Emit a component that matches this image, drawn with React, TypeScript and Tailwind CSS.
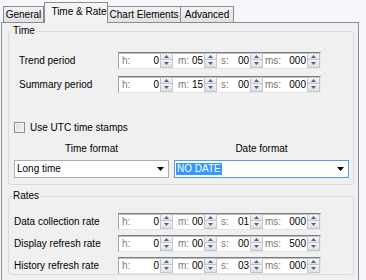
import type { ReactNode } from 'react'

type Row = { label: string; values: [string, string, string, string] }

const timeRows: Row[] = [
  { label: 'Trend period', values: ['0', '05', '00', '000'] },
  { label: 'Summary period', values: ['0', '15', '00', '000'] },
]

const rateRows: Row[] = [
  { label: 'Data collection rate', values: ['0', '00', '01', '000'] },
  { label: 'Display refresh rate', values: ['0', '00', '00', '500'] },
  { label: 'History refresh rate', values: ['0', '00', '03', '000'] },
]

function SpinButtons() {
  return (
    <span className="flex h-full w-[13px] shrink-0 flex-col">
      <span className="flex h-[7px] items-center justify-center border border-[#c2c6cc] bg-gradient-to-b from-[#f8f8f8] to-[#e3e4e6]">
        <svg width="5" height="3" viewBox="0 0 5 3">
          <path d="M0 3 L2.5 0 L5 3 Z" fill="#4b6489" />
        </svg>
      </span>
      <span className="flex flex-1 items-center justify-center border border-t-0 border-[#c2c6cc] bg-gradient-to-b from-[#f3f3f3] to-[#dfe0e2]">
        <svg width="5" height="3" viewBox="0 0 5 3">
          <path d="M0 0 L5 0 L2.5 3 Z" fill="#4b6489" />
        </svg>
      </span>
    </span>
  )
}

function Field({ label, value, className }: { label: string; value: string; className: string }) {
  return (
    <span className={`flex items-center justify-between pr-[1px] ${className}`}>
      <span className="text-[#7a7a7a]">{label}</span>
      <span className="text-black">{value}</span>
    </span>
  )
}

function SpinBox({ values }: { values: Row['values'] }) {
  return (
    <div className="flex h-[17px] w-[203px] shrink-0 items-stretch border border-t-[#7d7d7d] border-l-[#a3a3a3] border-r-[#e6e6e6] border-b-[#e6e6e6] bg-white pl-[3px] shadow-[inset_0_1px_0_#bdbdbd]">
      <Field label="h:" value={values[0]} className="w-[38px]" />
      <SpinButtons />
      <Field label="m:" value={values[1]} className="ml-[5px] w-[26px]" />
      <SpinButtons />
      <Field label="s:" value={values[2]} className="ml-[4px] w-[29px]" />
      <SpinButtons />
      <Field label="ms:" value={values[3]} className="ml-[2px] w-[42px]" />
      <SpinButtons />
    </div>
  )
}

function Group({ title, className, children }: { title: string; className: string; children: ReactNode }) {
  return (
    <fieldset className={`ml-[6px] w-[346px] rounded-[3px] border border-[#d5dbe1] ${className}`}>
      <legend className="ml-[3px] px-[1px] leading-[12px]">{title}</legend>
      {children}
    </fieldset>
  )
}

function DropArrow() {
  return (
    <svg width="7" height="4" viewBox="0 0 7 4" className="shrink-0">
      <path d="M0 0 L7 0 L3.5 4 Z" fill="#000" />
    </svg>
  )
}

function Tab({ label, className }: { label: string; className: string }) {
  return (
    <div className={`flex items-center justify-center border border-[#898c95] border-b-0 bg-gradient-to-b from-[#f3f3f3] to-[#e1e1e1] ${className}`}>
      {label}
    </div>
  )
}

export default function App() {
  return (
    <div className="h-[280px] w-[366px] overflow-hidden bg-[#f5f7fa] font-['Liberation_Sans',Arial,sans-serif] text-[10px] leading-[12px] text-black">
      {/* Tab strip */}
      <div className="flex h-[22px] items-end pl-[3px]">
        <Tab label="General" className="h-[16px] w-[41px]" />
        <div className="relative z-10 -mb-px flex h-[21px] w-[64px] items-center justify-center border border-[#898c95] border-b-0 bg-[#f4f4f4] pb-[3px] pl-[6px]">
          Time &amp; Rate
        </div>
        <Tab label="Chart Elements" className="h-[16px] w-[73px] border-l-0" />
        <Tab label="Advanced" className="h-[16px] w-[53px] border-l-0" />
      </div>

      {/* Panel */}
      <div className="ml-px h-[270px] w-[358px] border border-[#898c95] bg-[#f0f0f0] pt-[2px]">
        <Group title="Time" className="h-[160px]">
          <div className="mt-[15px] flex flex-col gap-[7px] pl-[10px]">
            {timeRows.map(row => (
              <div key={row.label} className="flex h-[17px] items-center">
                <span className="w-[99px] shrink-0">{row.label}</span>
                <SpinBox values={row.values} />
              </div>
            ))}
          </div>

          <label className="mt-[28px] ml-[5px] flex h-[13px] items-center gap-[5px]">
            <span className="h-[11px] w-[11px] shrink-0 border border-[#8f8f8f] bg-gradient-to-br from-[#dcdcdc] to-[#f4f4f4] shadow-[inset_0_0_0_1px_#f4f4f4]" />
            <span>Use UTC time stamps</span>
          </label>

          <div className="mt-[9px] ml-[5px] flex gap-[5px]">
            <div className="flex w-[155px] flex-col gap-[5px]">
              <span className="text-center">Time format</span>
              <div className="flex h-[18px] items-center justify-between border border-[#abadb3] bg-white pl-[2px] pr-[4px]">
                <span>Long time</span>
                <DropArrow />
              </div>
            </div>
            <div className="flex w-[175px] flex-col gap-[5px]">
              <span className="text-center">Date format</span>
              <div className="flex h-[18px] items-center justify-between border border-[#569de5] bg-white pl-[1px] pr-[4px]">
                <span className="bg-[#3399ff] px-[1px] text-white">NO DATE</span>
                <DropArrow />
              </div>
            </div>
          </div>
        </Group>

        <Group title="Rates" className="mt-[5px] h-[85px]">
          <div className="mt-[11px] flex flex-col gap-[5px] pl-[5px]">
            {rateRows.map(row => (
              <div key={row.label} className="flex h-[17px] items-center">
                <span className="w-[104px] shrink-0">{row.label}</span>
                <SpinBox values={row.values} />
              </div>
            ))}
          </div>
        </Group>
      </div>
    </div>
  )
}
